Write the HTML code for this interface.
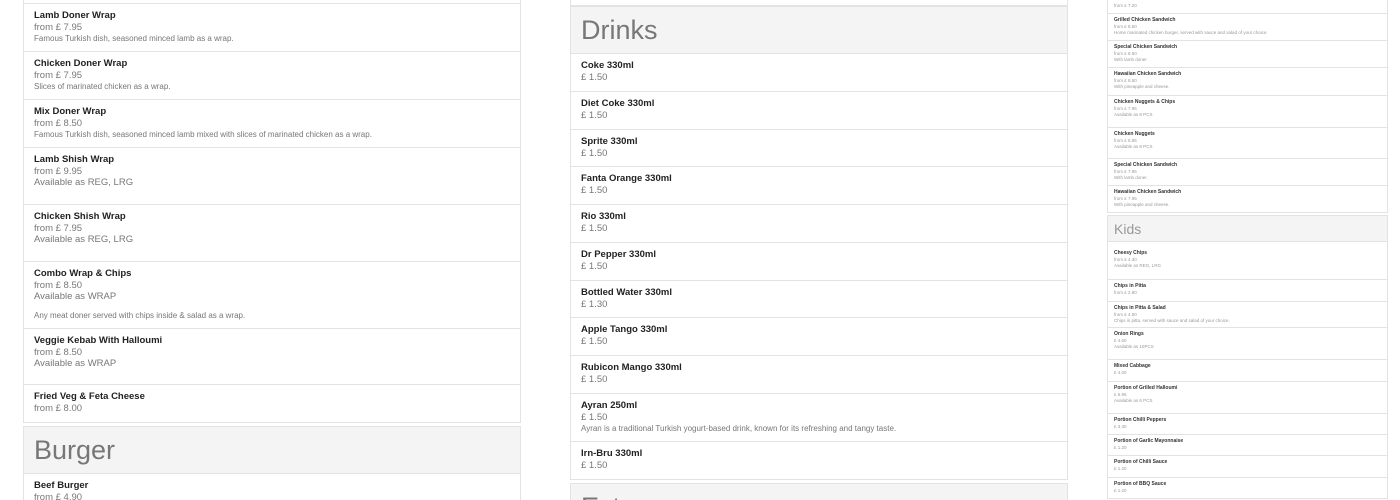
<!DOCTYPE html>
<html><head><meta charset="utf-8"><style>
*{margin:0;padding:0;box-sizing:border-box}
html,body{width:1400px;height:500px;overflow:hidden}
body{background:#fff;font-family:"Liberation Sans",sans-serif;position:relative}
.it{position:absolute;border:1px solid #e3e3e3;background:#fff;padding-left:10px}
.c1 .it{left:23px;width:498px;padding-top:6px}
.c2 .it{left:570px;width:498px;padding-top:6px}
.c1 div,.c2 div{font-size:9.5px;line-height:11.7px;color:#777;white-space:nowrap}
.c1 .n,.c2 .n{font-size:9.5px;font-weight:bold;color:#222}
.c1 .d,.c2 .d{font-size:8px;color:#777}
.c3 .it{left:1107px;width:281px;padding-left:6px;padding-top:3px}
.c3 div{font-size:4.5px;line-height:6.5px;color:#999;white-space:nowrap}
.c3 .n{font-size:5px;font-weight:bold;color:#333}
.h{position:absolute;background:#f4f4f4;border:1px solid #e3e3e3;color:#555;font-weight:normal}
</style></head><body>
<div class="c1">
<div class="it" style="top:-2px;height:6px"></div>
<div class="it" style="top:3px;height:49px"><div class="n">Lamb Doner Wrap</div><div>from £ 7.95</div><div class="d">Famous Turkish dish, seasoned minced lamb as a wrap.</div></div>
<div class="it" style="top:51px;height:49px"><div class="n">Chicken Doner Wrap</div><div>from £ 7.95</div><div class="d">Slices of marinated chicken as a wrap.</div></div>
<div class="it" style="top:99px;height:49px"><div class="n">Mix Doner Wrap</div><div>from £ 8.50</div><div class="d">Famous Turkish dish, seasoned minced lamb mixed with slices of marinated chicken as a wrap.</div></div>
<div class="it" style="top:147px;height:58px"><div class="n">Lamb Shish Wrap</div><div>from £ 9.95</div><div>Available as REG, LRG</div></div>
<div class="it" style="top:204px;height:58px"><div class="n">Chicken Shish Wrap</div><div>from £ 7.95</div><div>Available as REG, LRG</div></div>
<div class="it" style="top:261px;height:68px"><div class="n">Combo Wrap &amp; Chips</div><div>from £ 8.50</div><div>Available as WRAP</div><div class="d" style="margin-top:7px">Any meat doner served with chips inside &amp; salad as a wrap.</div></div>
<div class="it" style="top:328px;height:57px"><div class="n">Veggie Kebab With Halloumi</div><div>from £ 8.50</div><div>Available as WRAP</div></div>
<div class="it" style="top:384px;height:39px"><div class="n">Fried Veg &amp; Feta Cheese</div><div>from £ 8.00</div></div>
<div class="h" style="left:23px;top:426px;width:498px;height:48px;font-size:27px;line-height:46px;padding-left:10px">Burger</div>
<div class="it" style="top:473px;height:40px"><div class="n">Beef Burger</div><div>from £ 4.90</div></div>
</div>
<div class="c2">
<div class="it" style="top:-2px;height:6px"></div>
<div class="h" style="left:570px;top:6px;width:498px;height:48px;font-size:27px;line-height:46px;padding-left:10px">Drinks</div>
<div class="it" style="top:53px;height:39px"><div class="n">Coke 330ml</div><div>£ 1.50</div></div>
<div class="it" style="top:91px;height:39px"><div class="n">Diet Coke 330ml</div><div>£ 1.50</div></div>
<div class="it" style="top:129px;height:38px"><div class="n">Sprite 330ml</div><div>£ 1.50</div></div>
<div class="it" style="top:166px;height:39px"><div class="n">Fanta Orange 330ml</div><div>£ 1.50</div></div>
<div class="it" style="top:204px;height:39px"><div class="n">Rio 330ml</div><div>£ 1.50</div></div>
<div class="it" style="top:242px;height:39px"><div class="n">Dr Pepper 330ml</div><div>£ 1.50</div></div>
<div class="it" style="top:280px;height:38px"><div class="n">Bottled Water 330ml</div><div>£ 1.30</div></div>
<div class="it" style="top:317px;height:39px"><div class="n">Apple Tango 330ml</div><div>£ 1.50</div></div>
<div class="it" style="top:355px;height:39px"><div class="n">Rubicon Mango 330ml</div><div>£ 1.50</div></div>
<div class="it" style="top:393px;height:49px"><div class="n">Ayran 250ml</div><div>£ 1.50</div><div class="d">Ayran is a traditional Turkish yogurt-based drink, known for its refreshing and tangy taste.</div></div>
<div class="it" style="top:441px;height:39px"><div class="n">Irn-Bru 330ml</div><div>£ 1.50</div></div>
<div class="h" style="left:570px;top:483px;width:498px;height:40px;font-size:27px;line-height:46px;padding-left:10px">Extras</div>
</div>
<div class="c3">
<div class="it" style="top:-5px;height:19px;padding-top:0"><div class="n">Chicken Sandwich</div><div>from £ 7.20</div></div>
<div class="it" style="top:13px;height:28px"><div class="n">Grilled Chicken Sandwich</div><div>from £ 8.50</div><div>Home marinated chicken burger, served with sauce and salad of your choice.</div></div>
<div class="it" style="top:40px;height:28px"><div class="n">Special Chicken Sandwich</div><div>from £ 8.50</div><div>With lamb doner.</div></div>
<div class="it" style="top:67px;height:29px"><div class="n">Hawaiian Chicken Sandwich</div><div>from £ 8.50</div><div>With pineapple and cheese.</div></div>
<div class="it" style="top:95px;height:33px"><div class="n">Chicken Nuggets &amp; Chips</div><div>from £ 7.95</div><div>Available as 8 PCS</div></div>
<div class="it" style="top:127px;height:32px"><div class="n">Chicken Nuggets</div><div>from £ 5.95</div><div>Available as 8 PCS</div></div>
<div class="it" style="top:158px;height:28px"><div class="n">Special Chicken Sandwich</div><div>from £ 7.95</div><div>With lamb doner.</div></div>
<div class="it" style="top:185px;height:28px"><div class="n">Hawaiian Chicken Sandwich</div><div>from £ 7.95</div><div>With pineapple and cheese.</div></div>
<div class="h" style="left:1107px;top:215px;width:281px;height:27px;font-size:14px;line-height:26px;padding-left:6px">Kids</div>
<div class="it" style="top:241px;height:39px;padding-top:8px"><div class="n">Cheesy Chips</div><div>from £ 4.30</div><div>Available as REG, LRG</div></div>
<div class="it" style="top:279px;height:23px"><div class="n">Chips in Pitta</div><div>from £ 2.80</div></div>
<div class="it" style="top:301px;height:27px"><div class="n">Chips in Pitta &amp; Salad</div><div>from £ 4.50</div><div>Chips in pitta, served with sauce and salad of your choice.</div></div>
<div class="it" style="top:327px;height:33px"><div class="n">Onion Rings</div><div>£ 4.50</div><div>Available as 10PCS</div></div>
<div class="it" style="top:359px;height:23px"><div class="n">Mixed Cabbage</div><div>£ 4.00</div></div>
<div class="it" style="top:381px;height:33px"><div class="n">Portion of Grilled Halloumi</div><div>£ 5.95</div><div>Available as 6 PCS</div></div>
<div class="it" style="top:413px;height:22px"><div class="n">Portion Chilli Peppers</div><div>£ 3.30</div></div>
<div class="it" style="top:434px;height:22px"><div class="n">Portion of Garlic Mayonnaise</div><div>£ 1.20</div></div>
<div class="it" style="top:455px;height:23px"><div class="n">Portion of Chilli Sauce</div><div>£ 1.20</div></div>
<div class="it" style="top:477px;height:22px"><div class="n">Portion of BBQ Sauce</div><div>£ 1.20</div></div>
</div>
</body></html>
